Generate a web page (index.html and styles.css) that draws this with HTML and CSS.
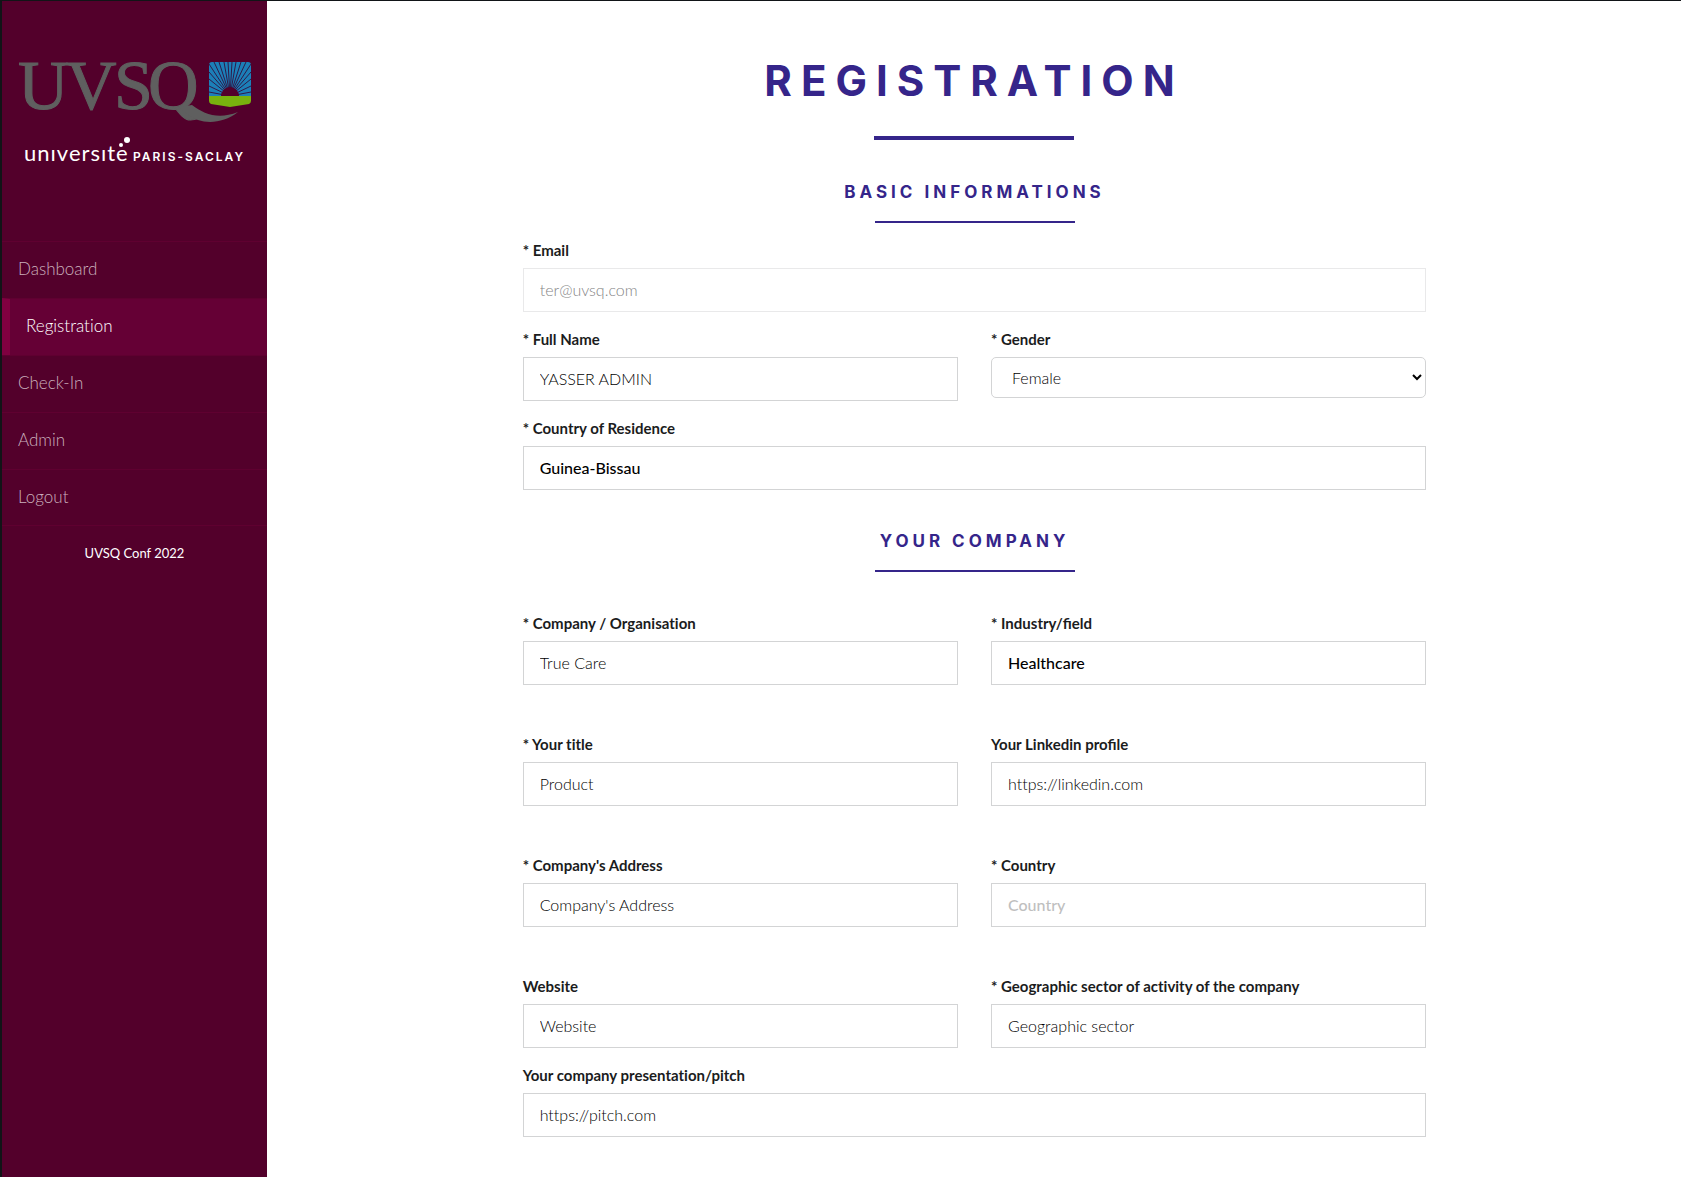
FILE: index.html
```html
<!DOCTYPE html>
<html lang="en">
<head>
<meta charset="utf-8">
<meta name="viewport" content="width=device-width, initial-scale=1">
<title>Registration</title>
<link rel="stylesheet" href="styles.css">
</head>
<body>
<div class="app">
  <aside class="sidebar">
    <a class="brand" href="#" aria-label="UVSQ université Paris-Saclay">
      <svg class="logo" viewBox="0 0 233 112" width="233" height="112">
        <text class="logo-name" x="0 48 96 130" y="49">UVSQ</text>
        <path class="logo-tail" d="M160 47 L174 45 C186 54 200 60 220 52 C207 62 192 64 180 60 C172 57 167 52 160 47Z"/>
        <path fill="#1c7fb8" d="M194 2h36a3 3 0 0 1 3 3v31h-42V5a3 3 0 0 1 3-3z"/>
        <path stroke="#2f1a4a" d="M212 36L191 32M212 36L191 26M212 36L191 19M212 36L191 12M212 36L191 4M212 36L196 2M212 36L201 2M212 36L206 2M212 36L210 2M212 36L214 2M212 36L218 2M212 36L223 2M212 36L228 2M212 36L233 4M212 36L233 12M212 36L233 19M212 36L233 26M212 36L233 32"/>
        <path fill="#53002b" d="M203 36a9 9 0 0 1 18 0z"/>
        <path fill="#78b20e" d="M191 36h42v5q0 2-2 3l-19 3-19-3q-2-1-2-3z"/>
        <text class="logo-univ" x="6" y="101">unıversıte</text>
        <circle cx="103" cy="85" r="2" fill="#fff"/>
        <circle cx="109" cy="80" r="3" fill="#fff"/>
        <text class="logo-paris" x="115" y="101">PARIS-SACLAY</text>
      </svg>
    </a>
    <nav class="menu">
      <a class="menu-item" href="#">Dashboard</a>
      <a class="menu-item menu-item-active" href="#" aria-current="page">Registration</a>
      <a class="menu-item" href="#">Check-In</a>
      <a class="menu-item" href="#">Admin</a>
      <a class="menu-item" href="#">Logout</a>
    </nav>
    <p class="copyright">UVSQ Conf 2022</p>
  </aside>
  <main class="main">
    <h1 class="title">REGISTRATION</h1>
    <form class="form">
      <h2 class="section-title">BASIC INFORMATIONS</h2>
      <div class="row">
        <div class="field"><label for="email">* Email</label><input id="email" type="email" value="ter@uvsq.com" disabled></div>
      </div>
      <div class="row">
        <div class="field"><label for="name">* Full Name</label><input id="name" type="text" value="YASSER ADMIN"></div>
        <div class="field"><label for="gender">* Gender</label><select id="gender"><option>Female</option><option>Male</option></select></div>
      </div>
      <div class="row">
        <div class="field"><label for="residence">* Country of Residence</label><input id="residence" class="search" type="text" value="Guinea-Bissau"></div>
      </div>
      <h2 class="section-title section-title-spaced">YOUR COMPANY</h2>
      <div class="row row-tall">
        <div class="field"><label for="company">* Company / Organisation</label><input id="company" type="text" value="True Care"></div>
        <div class="field"><label class="ligatures" for="industry">* Industry/field</label><input id="industry" class="search" type="text" value="Healthcare"></div>
      </div>
      <div class="row row-tall">
        <div class="field"><label for="job">* Your title</label><input id="job" type="text" value="Product"></div>
        <div class="field"><label class="ligatures" for="linkedin">Your Linkedin profile</label><input id="linkedin" type="text" value="https://linkedin.com"></div>
      </div>
      <div class="row row-tall">
        <div class="field"><label for="address">* Company's Address</label><input id="address" type="text" value="Company's Address"></div>
        <div class="field"><label for="country">* Country</label><input id="country" class="search" type="text" placeholder="Country"></div>
      </div>
      <div class="row">
        <div class="field"><label for="website">Website</label><input id="website" type="text" value="Website"></div>
        <div class="field"><label for="sector">* Geographic sector of activity of the company</label><input id="sector" type="text" value="Geographic sector"></div>
      </div>
      <div class="row">
        <div class="field"><label for="pitch">Your company presentation/pitch</label><input id="pitch" type="text" value="https://pitch.com"></div>
      </div>
    </form>
  </main>
</div>
</body>
</html>
```
FILE: styles.css
```css
*, *::before, *::after {
  box-sizing: border-box;
}

body {
  margin: 0;
  border-top: 1px solid #111417;
  border-left: 2px solid #111417;
  background: #fff;
  color: #1b1c1d;
  font-family: Lato, sans-serif;
  font-size: 16px;
  font-variant-ligatures: none;
}

.app {
  display: flex;
  min-height: calc(100vh - 1px);
}

.sidebar {
  flex: 0 0 265px;
  background: #53002b;
}

.brand {
  display: block;
  height: 240px;
  padding: 59px 16px 0;
}

.logo {
  display: block;
  overflow: visible;
}

.logo-name {
  fill: #5f5f5f;
  stroke: #5f5f5f;
  stroke-width: 1px;
  font-family: "Liberation Serif", serif;
  font-size: 70px;
}

.logo-tail {
  fill: #5f5f5f;
}

.logo-univ {
  fill: #fff;
  font-size: 22px;
  letter-spacing: 1px;
}

.logo-paris {
  fill: #fff;
  font-family: Inter, sans-serif;
  font-size: 12px;
  font-weight: 600;
  letter-spacing: 2px;
}

.menu-item {
  display: block;
  height: 57px;
  padding: 0 16px;
  border-top: 1px solid #5f0030;
  color: #cbb0bd;
  font-size: 17px;
  font-weight: 300;
  line-height: 54px;
  text-decoration: none;
}

.menu-item:last-child {
  border-bottom: 1px solid #5f0030;
}

.menu-item-active {
  border-left: 8px solid #800040;
  background: #650035;
  color: #fff;
}

.copyright {
  margin: 15px 0;
  color: #fff;
  font-size: 13px;
  line-height: 24px;
  text-align: center;
}

.main {
  flex: 1;
  min-width: 0;
  padding: 56px 0 38px;
}

.title,
.section-title {
  margin: 0;
  color: #35258a;
  font-family: Inter, sans-serif;
  font-weight: 700;
  text-align: center;
}

.title {
  font-size: 42px;
  letter-spacing: 9px;
  line-height: 48px;
}

.title::after,
.section-title::after {
  display: block;
  width: 200px;
  margin: 0 auto;
  background: #35258a;
  content: "";
}

.title::after {
  height: 4px;
  margin-top: 31px;
}

.form {
  width: 66.6667%;
  margin: 0 auto;
  padding: 40px 19px 0 20px;
}

.section-title {
  margin-bottom: 16px;
  font-size: 17px;
  letter-spacing: 4px;
  line-height: 24px;
}

.section-title::after {
  height: 2px;
  margin-top: 17px;
}

.section-title-spaced {
  margin: 39px 0 40px;
}

.row {
  display: flex;
  gap: 33px;
  margin-bottom: 16px;
}

.row-tall {
  margin-bottom: 48px;
}

.field {
  flex: 1;
  min-width: 0;
}

.field label {
  display: block;
  margin-bottom: 7px;
  font-size: 15px;
  font-weight: 700;
  line-height: 22px;
}

.field .ligatures {
  font-variant-ligatures: common-ligatures;
}

.field input,
.field select {
  display: block;
  width: 100%;
  height: 44px;
  padding: 0 16px 2px;
  border: 1px solid #d3d4d5;
  border-radius: 0;
  background: #fff;
  color: #000;
  font: 300 16px/24px Lato, sans-serif;
  font-variant-ligatures: none;
}

.field select {
  height: 41px;
  padding: 0 0 0 16px;
  border-radius: 5px;
}

.field input:disabled {
  border-color: #e9e9ea;
  color: #858586;
}

.field .search {
  font-weight: 500;
}

.field input::placeholder {
  color: #bfbfbf;
}
```
